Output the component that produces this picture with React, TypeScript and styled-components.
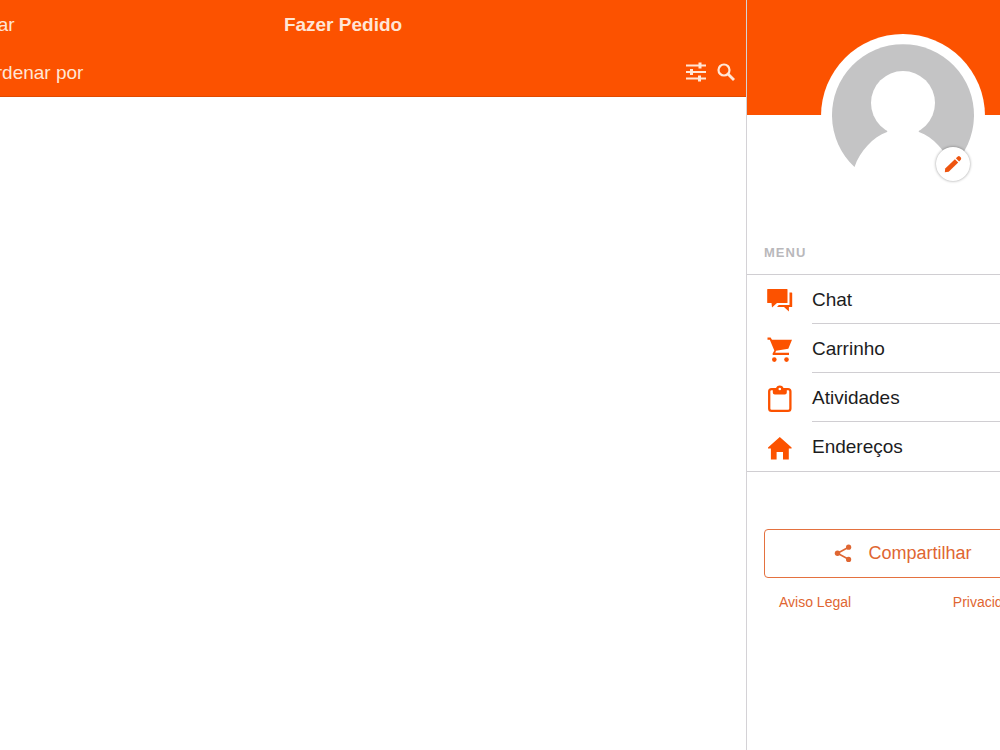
import React from 'react';
import styled, { createGlobalStyle } from 'styled-components';

const ORANGE = '#fc5200';

const GlobalStyle = createGlobalStyle`
  *, *::before, *::after { box-sizing: border-box; }
  body {
    margin: 0;
    background: #fff;
    font-family: "Liberation Sans", Arial, sans-serif;
    color: #1c1c1e;
  }
  button { font: inherit; border: 0; padding: 0; background: none; cursor: pointer; }
  a { text-decoration: none; color: inherit; }
`;

const Viewport = styled.div`
  overflow: hidden;
`;

const Track = styled.div`
  display: flex;
  min-height: 100vh;
  margin: 0 -58px 0 -60px;
`;

const Main = styled.main`
  flex: 1;
  min-width: 0;
`;

const Header = styled.header`
  background: ${ORANGE};
  color: #ffe6d6;
  border-bottom: 1px solid #e04a00;
`;

const TitleBar = styled.div`
  display: grid;
  grid-template-columns: 1fr auto 1fr;
  align-items: center;
  height: 50px;
  padding: 0 26px;
`;

const Title = styled.h1`
  margin: 0;
  font-size: 19px;
  line-height: 24px;
  font-weight: 700;
`;

const HeaderButton = styled.button`
  justify-self: start;
  color: inherit;
  font-size: 19px;
  line-height: 24px;
`;

const SortBar = styled.div`
  display: flex;
  align-items: center;
  height: 46px;
  padding: 0 10px 0 41px;
`;

const Tools = styled.div`
  display: flex;
  gap: 9px;
  margin-left: auto;
`;

const IconButton = styled.button`
  display: flex;
  color: inherit;
`;

const Drawer = styled.aside`
  flex: 0 0 312px;
  border-left: 1px solid #d4d2d6;
`;

const Banner = styled.div`
  height: 115px;
  padding-top: 34px;
  background: ${ORANGE};
`;

const Profile = styled.div`
  position: relative;
  width: 164px;
  height: 164px;
  margin: 0 auto;
`;

const EditButton = styled.button`
  position: absolute;
  right: 15px;
  bottom: 17px;
  display: flex;
  align-items: center;
  justify-content: center;
  width: 34px;
  height: 34px;
  border-radius: 50%;
  background: #fff;
  color: #ee540f;
  box-shadow: 0 0 3px rgba(0, 0, 0, 0.4);
`;

const MenuTitle = styled.h2`
  margin: 129px 0 0;
  padding: 0 17px 12px;
  font-size: 13px;
  line-height: 18px;
  font-weight: 700;
  letter-spacing: 1px;
  color: #b9b8bb;
`;

const Menu = styled.nav`
  border: solid #d0ced2;
  border-width: 1px 0;
`;

const MenuLink = styled.a`
  display: flex;
  align-items: center;
  gap: 18px;
  padding-left: 19px;
  color: ${ORANGE};
`;

const MenuLabel = styled.span<{ $last?: boolean }>`
  flex: 1;
  height: 49px;
  border-bottom: ${p => (p.$last ? 0 : 1)}px solid #d0ced2;
  font-size: 19px;
  line-height: 49px;
  color: #1c1c1e;
`;

const Share = styled.button`
  display: flex;
  align-items: center;
  justify-content: center;
  gap: 15px;
  width: calc(100% - 34px);
  height: 49px;
  margin: 57px 17px 0;
  border: 1px solid #e4713f;
  border-radius: 4px;
  font-size: 18px;
  color: #df6632;
`;

const Legal = styled.footer`
  display: flex;
  justify-content: space-between;
  padding: 15px 32px;
  font-size: 14px;
  line-height: 18px;
  color: #df6632;
`;

const Avatar = () => (
  <svg width="164" height="164" viewBox="0 0 164 164" aria-hidden="true">
    <circle cx="82" cy="82" r="82" fill="#fff" />
    <path d="M33.500 133A71 71 0 1 1 130.500 133Z" fill="#c4c4c5" />
    <circle cx="82" cy="69" r="32" fill="#fff" />
    <path
      d="M33.500 133C39 117 52 103 66 98Q67 97 65 94H99Q97 97 98 98C112 103 125 117 131 133V164H33.500Z"
      fill="#fff"
    />
  </svg>
);

const TuneIcon = () => (
  <svg width="22" height="22" viewBox="0 0 22 22" fill="none" stroke="currentColor" aria-hidden="true">
    <path d="M1 3.500H21M1 10H21M1 16.500H21" strokeWidth="2" />
    <path d="M15 .4V6.600M6.500 6.900V13.100M14.500 13.400V19.600" strokeWidth="3" />
  </svg>
);

const SearchIcon = () => (
  <svg width="20" height="22" viewBox="0 0 20 22" fill="none" stroke="currentColor" aria-hidden="true">
    <circle cx="8" cy="8" r="5.500" strokeWidth="2.200" />
    <path d="M12 12L18 18" strokeWidth="2.800" />
  </svg>
);

const PencilIcon = () => (
  <svg width="18" height="18" viewBox="0 0 18 18" fill="currentColor" aria-hidden="true">
    <path d="M.8 17.200L1.200 13.400L10.900 4.200L14.200 7.400L4.700 16.700Z" />
    <path d="M11.900 3.300L13.800 1.500Q15 .6 16.100 1.700L16.700 2.300Q17.700 3.500 16.800 4.700L15.100 6.500Z" />
  </svg>
);

const ShareIcon = () => (
  <svg width="20" height="20" viewBox="0 0 20 20" fill="currentColor" aria-hidden="true">
    <path d="M16 3L4.500 9.200L16 15.500" fill="none" stroke="currentColor" strokeWidth="1.600" />
    <circle cx="15.600" cy="3.200" r="2.600" />
    <circle cx="4.500" cy="9.200" r="2.700" />
    <circle cx="15.600" cy="15.400" r="2.600" />
  </svg>
);

const ChatIcon = () => (
  <svg width="28" height="28" viewBox="0 0 28 28" fill="currentColor" aria-hidden="true">
    <path d="M1.700 3H21Q21.500 3 21.500 3.500V16.500Q21.500 17 21 17H11L6 21.500L5.500 17H1.700Q1.200 17 1.200 16.500V3.500Q1.200 3 1.700 3Z" />
    <path d="M23.500 6.500H25.600Q26.200 6.500 26.200 7V20.500Q26.200 21 25.600 21H22.900V25.400L18 21H11L12.800 19H23.500Z" />
  </svg>
);

const CartIcon = () => (
  <svg width="28" height="28" viewBox="0 0 28 28" fill="currentColor" aria-hidden="true">
    <path d="M1.500 2.600H4.600L6 4.800H26L22.300 13.800L10 15.800L9.300 17.800H23V20H6.800L6.500 18.800L8.300 15.400L3.800 4.800H1.500Z" />
    <circle cx="8.300" cy="24.600" r="2.300" />
    <circle cx="20.500" cy="24.600" r="2.300" />
  </svg>
);

const ClipboardIcon = () => (
  <svg width="28" height="28" viewBox="0 0 28 28" fill="currentColor" aria-hidden="true">
    <rect x="3.200" y="5.200" width="21.200" height="21.600" rx="2.400" fill="none" stroke="currentColor" strokeWidth="2.300" />
    <path d="M6.800 5H9.800C10.400 .4 17.200 .4 17.800 5H20.800V8.500Q20.800 10.600 18.800 10.600H8.800Q6.800 10.600 6.800 8.500Z" />
    <circle cx="13.800" cy="5" r="1.300" fill="#fff" />
  </svg>
);

const HomeIcon = () => (
  <svg width="28" height="28" viewBox="0 0 28 28" fill="currentColor" aria-hidden="true">
    <path d="M13.800 4L25.600 14.600V15.500H22.800V26.400H17V19H10.600V26.400H4.900V15.500H2V14.600Z" />
  </svg>
);

const items = [
  { label: 'Chat', Icon: ChatIcon },
  { label: 'Carrinho', Icon: CartIcon },
  { label: 'Atividades', Icon: ClipboardIcon },
  { label: 'Endereços', Icon: HomeIcon },
];

export default function App() {
  return (
    <Viewport>
      <GlobalStyle />
      <Track>
        <Main>
          <Header>
            <TitleBar>
              <HeaderButton>Voltar</HeaderButton>
              <Title>Fazer Pedido</Title>
            </TitleBar>
            <SortBar>
              <HeaderButton>Ordenar por</HeaderButton>
              <Tools>
                <IconButton aria-label="Filtros"><TuneIcon /></IconButton>
                <IconButton aria-label="Buscar"><SearchIcon /></IconButton>
              </Tools>
            </SortBar>
          </Header>
        </Main>
        <Drawer>
          <Banner>
            <Profile>
              <Avatar />
              <EditButton aria-label="Editar foto"><PencilIcon /></EditButton>
            </Profile>
          </Banner>
          <MenuTitle>MENU</MenuTitle>
          <Menu>
            {items.map(({ label, Icon }, i) => (
              <MenuLink href="#" key={label}>
                <Icon />
                <MenuLabel $last={i === items.length - 1}>{label}</MenuLabel>
              </MenuLink>
            ))}
          </Menu>
          <Share>
            <ShareIcon />
            Compartilhar
          </Share>
          <Legal>
            <a href="#">Aviso Legal</a>
            <a href="#">Privacidade</a>
          </Legal>
        </Drawer>
      </Track>
    </Viewport>
  );
}
